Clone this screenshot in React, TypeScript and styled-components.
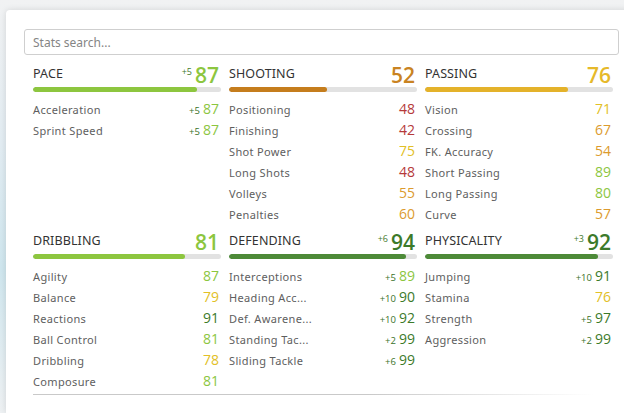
import React from "react";
import styled, { createGlobalStyle } from "styled-components";

const Global = createGlobalStyle`
  html, body { margin: 0; padding: 0; }
  body {
    width: 624px; height: 413px; overflow: hidden;
    background: linear-gradient(180deg, #f1f2f3 0%, #e2ecf2 35%, #cfe6ee 65%, #eef1f3 100%);
    font-family: "Noto Sans", "Liberation Sans", sans-serif;
  }
`;

const Page = styled.div`
  padding: 10px 0 0 6px;
  height: 413px;
  box-sizing: border-box;
`;

const Card = styled.div`
  background: #fff;
  height: 403px;
  width: 640px;
  border-radius: 4px 0 0 0;
  box-shadow: 0 0 6px rgba(0, 0, 0, 0.12);
  padding: 19px 0 0 18px;
  box-sizing: border-box;
`;

const Search = styled.input`
  display: block;
  width: 595px;
  height: 26px;
  box-sizing: border-box;
  border: 1px solid #cfcfcf;
  border-radius: 3px;
  padding: 0 8px;
  font-family: "Noto Sans", sans-serif;
  font-size: 12px;
  color: #333;
  outline: none;
  &::placeholder { color: #858585; }
`;

const Grid = styled.div`
  display: grid;
  grid-template-columns: repeat(3, 188px);
  column-gap: 8px;
  row-gap: 5px;
  margin: 7px 0 0 9px;
`;

const Section = styled.div`
  display: flex;
  flex-direction: column;
`;

const Header = styled.div`
  display: flex;
  align-items: flex-end;
  height: 24px;
`;

const Title = styled.div`
  flex: 1;
  font-size: 12.5px;
  color: #333;
  letter-spacing: 0.1px;
  align-self: flex-start;
  margin-top: 3px;
`;

const HeadMod = styled.span`
  font-family: "Open Sans", sans-serif;
  font-size: 9px;
  color: #3f7a2d;
  align-self: flex-start;
  margin: 3px 3px 0 0;
`;

const HeadVal = styled.span<{ $c: string }>`
  font-family: "Open Sans", sans-serif;
  font-size: 21px;
  font-weight: 600;
  line-height: 22px;
  color: ${(p) => p.$c};
  margin-right: 2px;
`;

const Track = styled.div`
  height: 5px;
  border-radius: 3px;
  background: #e2e2e2;
  margin-top: 1px;
  overflow: hidden;
`;

const Fill = styled.div<{ $c: string }>`
  height: 100%;
  border-radius: 3px;
  background: ${(p) => p.$c};
`;

const Rows = styled.div`
  margin-top: 6px;
  height: 126px;
`;

const Row = styled.div`
  display: flex;
  align-items: baseline;
  height: 21px;
  line-height: 21px;
`;

const Label = styled.span`
  flex: 1;
  font-size: 11px;
  color: #5e5e5e;
  letter-spacing: 0.35px;
  white-space: nowrap;
`;

const Mod = styled.span`
  font-family: "Open Sans", sans-serif;
  font-size: 9.5px;
  color: #3a7229;
  margin-right: 3px;
`;

const Val = styled.span<{ $c: string }>`
  font-family: "Open Sans", sans-serif;
  font-size: 14px;
  color: ${(p) => p.$c};
  margin-right: 2px;
`;

const Divider = styled.div`
  height: 1px;
  margin: 3px 0 0 9px;
  width: 560px;
  background: linear-gradient(90deg, #c9c9c9 0%, #c9c9c9 60%, rgba(201,201,201,0) 100%);
`;

const valColor = (v: number) => {
  if (v >= 90) return "#3c7a2a";
  if (v >= 80) return "#8cc63f";
  if (v >= 70) return "#e2c026";
  if (v >= 50) return "#dc9b2e";
  return "#b5393a";
};

type Stat = { n: string; v: number; m?: number };
type Group = { t: string; v: number; m?: number; bar: string; hv: string; s: Stat[] };

const groups: Group[] = [
  { t: "PACE", v: 87, m: 5, bar: "#8dc63f", hv: "#8cc63f", s: [
    { n: "Acceleration", v: 87, m: 5 }, { n: "Sprint Speed", v: 87, m: 5 } ] },
  { t: "SHOOTING", v: 52, bar: "#c57d1d", hv: "#c98322", s: [
    { n: "Positioning", v: 48 }, { n: "Finishing", v: 42 }, { n: "Shot Power", v: 75 },
    { n: "Long Shots", v: 48 }, { n: "Volleys", v: 55 }, { n: "Penalties", v: 60 } ] },
  { t: "PASSING", v: 76, bar: "#e4b22a", hv: "#e6b92a", s: [
    { n: "Vision", v: 71 }, { n: "Crossing", v: 67 }, { n: "FK. Accuracy", v: 54 },
    { n: "Short Passing", v: 89 }, { n: "Long Passing", v: 80 }, { n: "Curve", v: 57 } ] },
  { t: "DRIBBLING", v: 81, bar: "#8dc63f", hv: "#8cc63f", s: [
    { n: "Agility", v: 87 }, { n: "Balance", v: 79 }, { n: "Reactions", v: 91 },
    { n: "Ball Control", v: 81 }, { n: "Dribbling", v: 78 }, { n: "Composure", v: 81 } ] },
  { t: "DEFENDING", v: 94, m: 6, bar: "#4d8a38", hv: "#3c7a2a", s: [
    { n: "Interceptions", v: 89, m: 5 }, { n: "Heading Acc...", v: 90, m: 10 },
    { n: "Def. Awarene...", v: 92, m: 10 }, { n: "Standing Tac...", v: 99, m: 2 },
    { n: "Sliding Tackle", v: 99, m: 6 } ] },
  { t: "PHYSICALITY", v: 92, m: 3, bar: "#4d8a38", hv: "#3c7a2a", s: [
    { n: "Jumping", v: 91, m: 10 }, { n: "Stamina", v: 76 }, { n: "Strength", v: 97, m: 5 },
    { n: "Aggression", v: 99, m: 2 } ] },
];

export default function App() {
  return (
    <>
      <Global />
      <Page>
        <Card>
          <Search placeholder="Stats search..." />
          <Grid>
            {groups.map((g) => (
              <Section key={g.t}>
                <Header>
                  <Title>{g.t}</Title>
                  {g.m ? <HeadMod>+{g.m}</HeadMod> : null}
                  <HeadVal $c={g.hv}>{g.v}</HeadVal>
                </Header>
                <Track>
                  <Fill $c={g.bar} style={{ width: `${g.v}%` }} />
                </Track>
                <Rows>
                  {g.s.map((s) => (
                    <Row key={s.n}>
                      <Label>{s.n}</Label>
                      {s.m ? <Mod>+{s.m}</Mod> : null}
                      <Val $c={valColor(s.v)}>{s.v}</Val>
                    </Row>
                  ))}
                </Rows>
              </Section>
            ))}
          </Grid>
          <Divider />
        </Card>
      </Page>
    </>
  );
}
